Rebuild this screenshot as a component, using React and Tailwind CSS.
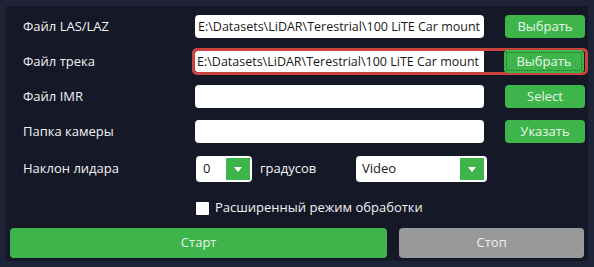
import React from 'react';

const font = { fontFamily: '"Open Sans", "Noto Sans", sans-serif' };

const Arrow = () => (
  <svg width="8" height="5" viewBox="0 0 8 5">
    <path d="M0 0 H8 L4 5 Z" fill="#ffffff" />
  </svg>
);

const GreenButton = ({ children, focused }) => (
  <button className="w-[80px] h-[23px] rounded-[4px] bg-[#3db54b] text-[#eaf6ea] text-[13px] flex items-center justify-center">
    {focused ? (
      <span className="w-[76px] h-[19px] border border-dotted border-[#1f6b2a] flex items-center justify-center">
        {children}
      </span>
    ) : (
      children
    )}
  </button>
);

const FileRow = ({ label, value, button, highlight }) => (
  <div className="h-[35px] flex items-center">
    <div className="w-[189px] pl-[17px] text-[13px] text-[#f2f2f2]">{label}</div>
    {highlight ? (
      <div className="-ml-[3px] flex items-center h-[27px] border-[3px] border-[#c8443d] rounded-[5px] pr-[1px]">
        <div className="w-[289px] h-[21px] bg-white rounded-l-[3px] pl-[2px] text-[12.5px] text-[#1a1a1a] leading-[21px] overflow-hidden whitespace-nowrap">
          {value}
        </div>
        <div className="ml-[20px]">
          <GreenButton focused>{button}</GreenButton>
        </div>
      </div>
    ) : (
      <>
        <div className="w-[289px] h-[23px] bg-white rounded-[4px] pl-[3px] text-[12.5px] text-[#1a1a1a] leading-[23px] overflow-hidden whitespace-nowrap">
          {value}
        </div>
        <div className="ml-[21px]">
          <GreenButton>{button}</GreenButton>
        </div>
      </>
    )}
  </div>
);

export default function App() {
  return (
    <div className="w-[594px] h-[267px] bg-[#1e2236] p-[6px]" style={font}>
      <div className="w-full h-full bg-[#151827] pt-[3px]">
        <FileRow label="Файл LAS/LAZ" value="E:\Datasets\LiDAR\Terestrial\100 LiTE Car mount" button="Выбрать" />
        <FileRow label="Файл трека" value="E:\Datasets\LiDAR\Terestrial\100 LiTE Car mount" button="Выбрать" highlight />
        <FileRow label="Файл IMR" value="" button="Select" />
        <FileRow label="Папка камеры" value="" button="Указать" />

        <div className="h-[40px] flex items-center">
          <div className="w-[190px] pl-[17px] text-[13px] text-[#f2f2f2]">Наклон лидара</div>
          <div className="w-[56px] h-[26px] bg-white rounded-[4px] flex items-center justify-between pl-[7px] pr-[2px]">
            <span className="text-[13px] text-[#1a1a1a]">0</span>
            <span className="w-[24px] h-[22px] bg-[#3db54b] flex items-center justify-center">
              <Arrow />
            </span>
          </div>
          <div className="ml-[8px] w-[96px] text-[13px] text-[#f2f2f2]">градусов</div>
          <div className="w-[131px] h-[26px] bg-white rounded-[4px] flex items-center justify-between pl-[6px] pr-[3px]">
            <span className="text-[13px] text-[#1a1a1a]">Video</span>
            <span className="w-[24px] h-[22px] bg-[#3db54b] flex items-center justify-center">
              <Arrow />
            </span>
          </div>
        </div>

        <div className="h-[38px] flex items-center pl-[190px]">
          <span className="w-[13px] h-[13px] bg-white rounded-[1px]" />
          <span className="ml-[6px] text-[13px] text-[#f2f2f2]">Расширенный режим обработки</span>
        </div>

        <div className="mt-[1px] flex px-[4px] gap-[12px]">
          <button className="w-[378px] h-[30px] rounded-[4px] bg-[#3db54b] text-[#e6f4e6] text-[13px]">Старт</button>
          <button className="w-[185px] h-[30px] rounded-[4px] bg-[#999999] text-[#f0f0f0] text-[13px]">Стоп</button>
        </div>
      </div>
    </div>
  );
}
